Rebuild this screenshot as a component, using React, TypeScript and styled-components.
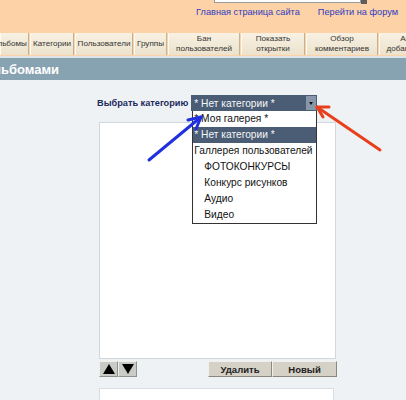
import styled, { createGlobalStyle } from "styled-components";

const GlobalStyle = createGlobalStyle`
  html, body {
    margin: 0;
    padding: 0;
    background: #eef2f5;
  }
  body {
    width: 406px;
    height: 400px;
    overflow: hidden;
    font-family: "Liberation Sans", Arial, sans-serif;
  }
`;

const Page = styled.div`
  position: relative;
  width: 406px;
  height: 400px;
  overflow: hidden;
  background: #eef2f5;
`;

const TopBar = styled.div`
  height: 31px;
  background: #fcd2a6;
  display: flex;
  flex-direction: column;
  align-items: flex-end;
  padding-right: 8px;
  box-sizing: border-box;
`;

const SearchRow = styled.div`
  display: flex;
  margin-top: -13px;
  margin-right: 31px;
`;

const SearchInput = styled.div`
  width: 145px;
  height: 14px;
  background: #fff;
  border: 1px solid #9a9a9a;
`;

const SearchButton = styled.div`
  width: 6px;
  height: 17px;
  background: #5e5e5e;
`;

const Links = styled.div`
  display: flex;
  gap: 18px;
  margin-top: 2px;
  font-size: 9.2px;
  line-height: 12px;
  color: #2e3ac4;
`;

const Nav = styled.div`
  height: 25px;
  background: #fcd2a6;
  padding-top: 2px;
  box-sizing: border-box;
  display: flex;
  gap: 1px;
`;

const Tab = styled.div<{ w: number }>`
  position: relative;
  flex: none;
  width: ${(p) => p.w}px;
  height: 22px;
  box-sizing: border-box;
  background: linear-gradient(#f8f1e3, #ece2cc);
  border-left: 1px solid #fffaf0;
  border-right: 1px solid #c4b296;
  display: flex;
  align-items: center;
  justify-content: center;
  text-align: center;
  font-size: 8.1px;
  line-height: 10px;
  color: #333;
  white-space: nowrap;
`;

/* part of a word that lies left of the visible window */
const Cut = styled.span`
  position: absolute;
  right: 100%;
  white-space: nowrap;
`;

const Word = styled.span`
  position: relative;
`;

const Divider = styled.div`
  height: 2px;
  background: #dde3e8;
`;

const TitleBar = styled.div`
  height: 22px;
  background: #87a2b1;
  color: #fff;
  font-size: 13px;
  font-weight: bold;
  display: flex;
  align-items: center;
  padding-left: 1px;
`;

const Body = styled.div`
  padding: 15px 0 0 99px;
`;

const CategoryRow = styled.div`
  display: flex;
  align-items: center;
  gap: 3px;
  height: 16px;
  margin-left: -2px;
`;

const Label = styled.span`
  font-size: 9.2px;
  font-weight: bold;
  color: #1c2b5b;
`;

const Select = styled.div`
  position: relative;
  width: 126px;
  height: 16px;
  box-sizing: border-box;
  background: #4b5d75;
  color: #f4f6f8;
  font-size: 10.2px;
  display: flex;
  align-items: center;
  padding-left: 3px;
`;

const SelectArrow = styled.div`
  margin-left: auto;
  margin-right: 1px;
  width: 10px;
  height: 14px;
  background: #8797a9;
  display: flex;
  align-items: center;
  justify-content: center;

  &::after {
    content: "";
    border-left: 2.5px solid transparent;
    border-right: 2.5px solid transparent;
    border-top: 3px solid #111;
  }
`;

const Dropdown = styled.div`
  position: absolute;
  top: 16px;
  left: 1px;
  width: 125px;
  background: #fff;
  border: 1px solid #333;
  border-top: none;
  box-sizing: border-box;
  z-index: 2;
`;

const Option = styled.div<{ indent?: boolean; selected?: boolean }>`
  height: 16px;
  line-height: 16px;
  font-size: 10.2px;
  padding-left: ${(p) => (p.indent ? 11 : 1)}px;
  white-space: nowrap;
  overflow: hidden;
  color: ${(p) => (p.selected ? "#f4f6f8" : "#111")};
  background: ${(p) => (p.selected ? "#4b5d75" : "transparent")};
`;

const ListBox = styled.div`
  margin-top: 11px;
  width: 237px;
  height: 237px;
  box-sizing: border-box;
  background: #fff;
  border: 1px solid #d0d7dd;
`;

const ButtonRow = styled.div`
  margin-top: 2px;
  width: 238px;
  height: 16px;
  display: flex;
`;

const ArrowButton = styled.div<{ down?: boolean }>`
  width: 19px;
  height: 16px;
  box-sizing: border-box;
  background: #c9cbc7;
  border-top: 1px solid #eef0ec;
  border-left: 1px solid #eef0ec;
  border-right: 1px solid #8f918c;
  border-bottom: 1px solid #8f918c;
  display: flex;
  align-items: center;
  justify-content: center;

  &::after {
    content: "";
    border-left: 6px solid transparent;
    border-right: 6px solid transparent;
    ${(p) =>
      p.down ? "border-top: 10px solid #000;" : "border-bottom: 10px solid #000;"}
  }
`;

const Spacer = styled.div`
  flex: 1;
`;

const ActionButton = styled.div<{ w: number }>`
  width: ${(p) => p.w}px;
  height: 16px;
  box-sizing: border-box;
  background: #d5d1c7;
  border-top: 1px solid #f2f0ea;
  border-left: 1px solid #f2f0ea;
  border-right: 1px solid #8a877e;
  border-bottom: 1px solid #8a877e;
  font-size: 9.5px;
  font-weight: bold;
  color: #222;
  display: flex;
  align-items: center;
  justify-content: center;
`;

const SecondBox = styled.div`
  margin-top: 11px;
  width: 235px;
  height: 40px;
  box-sizing: border-box;
  background: #fff;
  border: 1px solid #d8dee3;
`;

const Marks = styled.svg`
  position: absolute;
  top: 0;
  left: 0;
  z-index: 3;
  pointer-events: none;
`;

const tabs: { w: number; label: React.ReactNode }[] = [
  { w: 44, label: "Категории" },
  { w: 58, label: "Пользователи" },
  { w: 33, label: "Группы" },
  { w: 72, label: <>Бан<br />пользователей</> },
  { w: 64, label: <>Показать<br />открытки</> },
  { w: 72, label: <>Обзор<br />комментариев</> },
  { w: 60, label: <>Авто<br />добавление</> },
];

const options = [
  { text: "* Моя галерея *" },
  { text: "* Нет категории *", selected: true },
  { text: "Галлерея пользователей" },
  { text: "ФОТОКОНКУРСЫ", indent: true },
  { text: "Конкурс рисунков", indent: true },
  { text: "Аудио", indent: true },
  { text: "Видео", indent: true },
];

function App() {
  return (
    <Page>
      <GlobalStyle />
      <TopBar>
        <SearchRow>
          <SearchInput />
          <SearchButton />
        </SearchRow>
        <Links>
          <span>Главная страница сайта</span>
          <span>Перейти на форум</span>
        </Links>
      </TopBar>
      <Nav>
        <Tab w={29}>
          <Word>
            <Cut>Ал</Cut>ьбомы
          </Word>
        </Tab>
        {tabs.map((t, i) => (
          <Tab key={i} w={t.w}>
            {t.label}
          </Tab>
        ))}
      </Nav>
      <Divider />
      <TitleBar>
        <Word>
          <Cut>Управление ал</Cut>ьбомами
        </Word>
      </TitleBar>
      <Body>
        <CategoryRow>
          <Label>Выбрать категорию</Label>
          <Select>
            * Нет категории *
            <SelectArrow />
            <Dropdown>
              {options.map((o) => (
                <Option key={o.text} indent={o.indent} selected={o.selected}>
                  {o.text}
                </Option>
              ))}
            </Dropdown>
          </Select>
        </CategoryRow>
        <ListBox />
        <ButtonRow>
          <ArrowButton />
          <ArrowButton down />
          <Spacer />
          <ActionButton w={64}>Удалить</ActionButton>
          <ActionButton w={65}>Новый</ActionButton>
        </ButtonRow>
        <SecondBox />
      </Body>
      <Marks width={406} height={400}>
        <g fill="none" strokeWidth={3} strokeLinecap="round" strokeLinejoin="round">
          <g stroke="#2030e0">
            <path d="M149 160 L201 117" />
            <path d="M188 120 L201 117 L196 129" />
          </g>
          <g stroke="#e8401c">
            <path d="M380 150 L317 107" />
            <path d="M329 107 L317 107 L323 117" />
          </g>
        </g>
      </Marks>
    </Page>
  );
}

export default App;
